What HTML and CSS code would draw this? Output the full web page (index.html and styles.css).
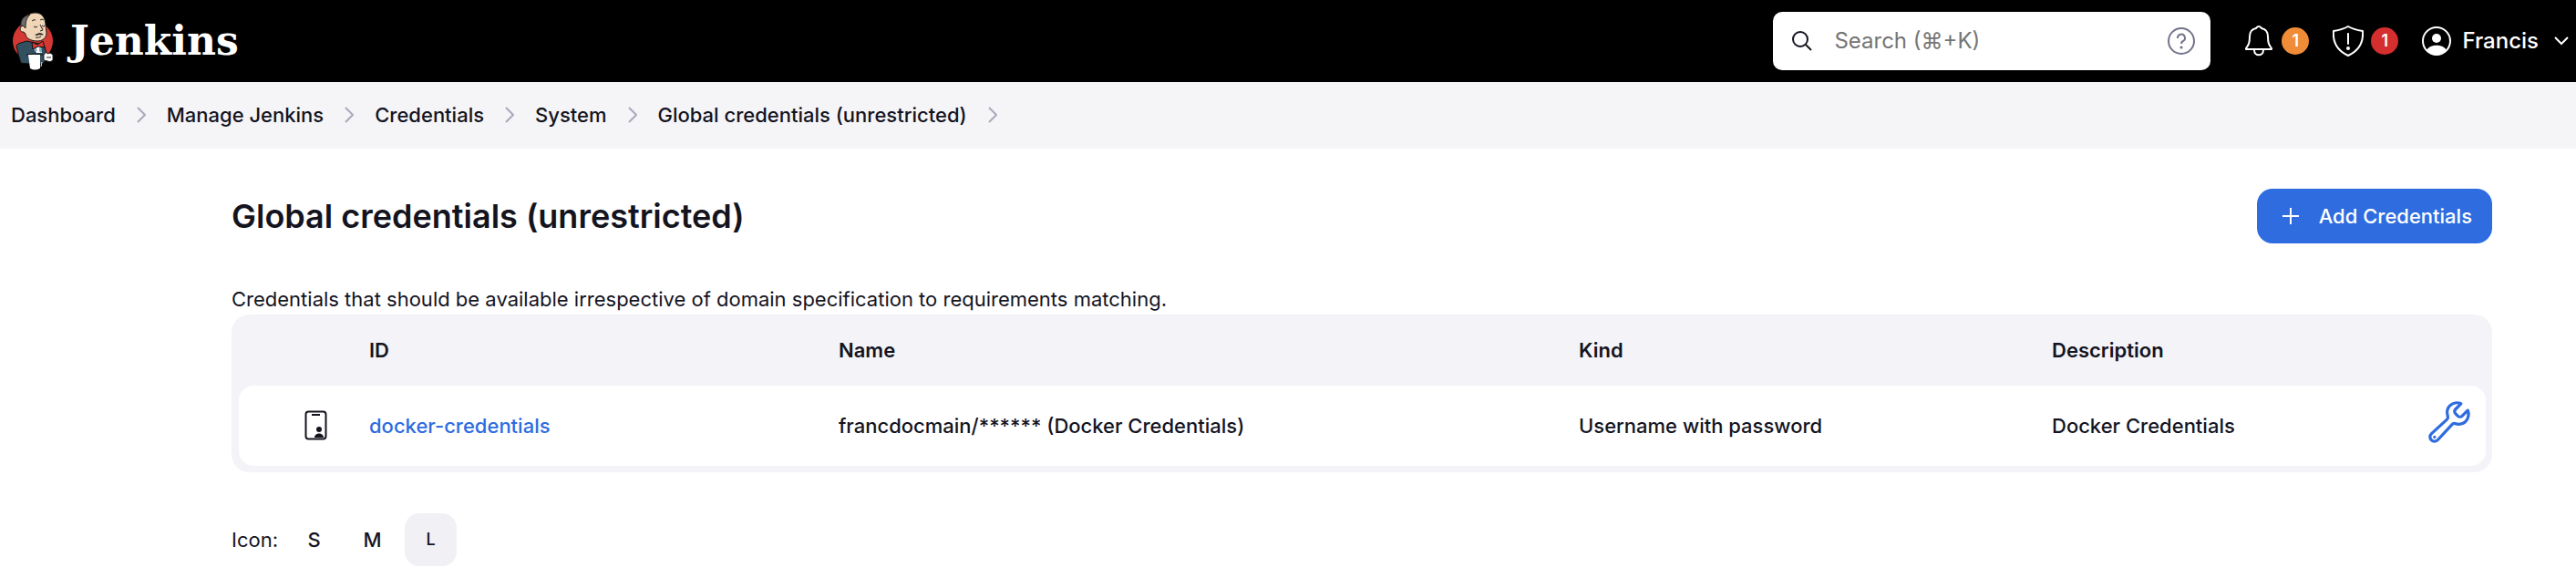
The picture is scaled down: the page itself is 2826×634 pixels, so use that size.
FILE: index.html
```html
<!DOCTYPE html>
<html lang="en">
<head>
<meta charset="utf-8">
<title>Global credentials (unrestricted) - Jenkins</title>
<link rel="stylesheet" href="styles.css">
</head>
<body>
<header class="header">
  <a class="brand" href="#" aria-label="Jenkins">
    <svg class="brand-face" viewBox="0 0 46 64" aria-hidden="true">
      <ellipse cx="23" cy="32" rx="22" ry="22" fill="#d33833"/>
      <path d="M7 35L16 32L30 35L36 38L38 46L36 55L30 58L10 56L7 46L5 37Z" fill="#335061" stroke="#111" stroke-width="1"/>
      <path d="M22 36L31 38L33 45L27 45Z" fill="#fff"/>
      <path d="M23 39L26 38L28 43L25 43ZM30 39L33 40L32 45L30 43Z" fill="#81b0c4"/>
      <path d="M13 15C13 6 18 1 26 1C34 1 37 8 37 15L38 23C38 29 33 32 28 32C21 32 15 29 15 24L13 22C8 23 8 15 13 15Z" fill="#f0d6b7" stroke="#222" stroke-width="1"/>
      <path d="M10 16C9 9 13 4 20 3C16 7 15 10 15 18L12 15Z" fill="#6d6b6d" stroke="#222" stroke-width="1"/>
      <path d="M24 16q2 2 4 0M33 15q2 2 3 0M31 14l3 6-3 1M22 10q2-2 4-1M31 9q2-2 4 0M26 28q4 1 6-1" fill="none" stroke="#222" stroke-width="1"/>
      <path d="M25 25q3-1 5-2q3 0 5 2q-3 1-5 0q-2 2-5 0z" fill="#333"/>
      <path d="M22 33L28 36L34 32L36 39L29 38L23 41Z" fill="#d33833" stroke="#111" stroke-width="1"/>
      <path d="M16 47Q24 45 34 47" fill="none" stroke="#111" stroke-width="1"/>
      <path d="M18 47L31 47L31 62Q25 65 20 62Z" fill="#fff"/>
      <path d="M33 55L32 60" stroke="#ddd" stroke-width="1"/>
      <path d="M35 47l3-3 1 2 3-1 3 2v6q-3 3-6 1l-4-1z" fill="#fff" stroke="#222" stroke-width="1"/>
      <path d="M38 50h5" stroke="#222" stroke-width="1"/>
    </svg>
    <span class="brand-name">Jenkins</span>
  </a>
  <div class="header-tools">
    <div class="search">
      <svg class="search-icon" viewBox="0 0 22 22" aria-hidden="true"><circle cx="9" cy="9" r="8"/><path d="M15 15l6 6"/></svg>
      <input class="search-input" type="text" placeholder="Search (⌘+K)" aria-label="Search">
      <a class="search-help" href="#" aria-label="Search help"><svg viewBox="0 0 30 30"><circle cx="15" cy="15" r="14"/><path d="M11 12a4 4 0 1 1 6 3c-2 1-2 2-2 3"/><circle class="dot" cx="15" cy="22" r="1.6"/></svg></a>
    </div>
    <button class="tool" type="button" aria-label="Notifications">
      <svg class="tool-icon" viewBox="0 0 34 34"><path d="M17 1c-2 0-2 1-3 2-5 1-7 5-7 9 0 7-1 9-4 13v1h28v-1c-3-4-4-6-4-13 0-4-2-8-7-9-1-1-1-2-3-2zM12 27c0 7 10 7 10 0"/></svg>
      <span class="badge badge-orange">1</span>
    </button>
    <button class="tool" type="button" aria-label="Security warnings">
      <svg class="tool-icon" viewBox="0 0 34 34"><path d="M17 1c5 3 10 4 16 5 1 12-3 21-16 27C4 27 0 18 1 6c6-1 11-2 16-5zM17 9v11"/><circle class="dot" cx="17" cy="25" r="2"/></svg>
      <span class="badge badge-red">1</span>
    </button>
    <button class="user" type="button">
      <svg class="user-icon" viewBox="0 0 32 32" aria-hidden="true"><circle cx="16" cy="16" r="15" fill="none" stroke="#fff" stroke-width="2"/><circle cx="16" cy="13" r="5" fill="#fff"/><path d="M5 26c4-7 18-7 22 0-6 7-16 7-22 0z" fill="#fff"/></svg>
      <span>Francis</span>
      <svg class="user-chevron" viewBox="0 0 16 10" aria-hidden="true"><path d="M1 1l7 7 7-7"/></svg>
    </button>
  </div>
</header>
<nav class="crumbs" aria-label="Breadcrumbs">
  <a href="#">Dashboard</a><svg viewBox="0 0 10 18"><path d="M1 1l8 8-8 8"/></svg>
  <a href="#">Manage Jenkins</a><svg viewBox="0 0 10 18"><path d="M1 1l8 8-8 8"/></svg>
  <a href="#">Credentials</a><svg viewBox="0 0 10 18"><path d="M1 1l8 8-8 8"/></svg>
  <a href="#">System</a><svg viewBox="0 0 10 18"><path d="M1 1l8 8-8 8"/></svg>
  <a href="#">Global credentials (unrestricted)</a><svg viewBox="0 0 10 18"><path d="M1 1l8 8-8 8"/></svg>
</nav>
<main class="main">
  <div class="title-bar">
    <h1>Global credentials (unrestricted)</h1>
    <button class="add" type="button"><svg viewBox="0 0 18 18" aria-hidden="true"><path d="M9 0v18M0 9h18"/></svg>Add Credentials</button>
  </div>
  <p class="intro">Credentials that should be available irrespective of domain specification to requirements matching.</p>
  <div class="table-box">
    <table class="table">
      <colgroup><col class="c-icon"><col class="c-id"><col class="c-name"><col class="c-kind"><col class="c-desc"><col class="c-tool"></colgroup>
      <thead><tr><th></th><th>ID</th><th>Name</th><th>Kind</th><th>Description</th><th></th></tr></thead>
      <tbody><tr>
        <td class="cell-icon"><svg class="cred-icon" viewBox="0 0 26 34" aria-hidden="true"><rect x="1.5" y="1.5" width="22" height="30" rx="3" fill="none" stroke="#14141f" stroke-width="2"/><path d="M8 5h9" stroke="#14141f" stroke-width="2"/><circle cx="16" cy="21" r="3" fill="#14141f"/><path d="M11 30c0-6 10-6 10 0z" fill="#14141f"/></svg></td>
        <td><a class="cred-link" href="#">docker-credentials</a></td>
        <td>francdocmain/****** (Docker Credentials)</td>
        <td>Username with password</td>
        <td>Docker Credentials</td>
        <td class="cell-tool"><a href="#" aria-label="Update"><svg class="wrench" viewBox="0 0 512 512"><path d="M393.87 190a32.1 32.1 0 01-45.25 0l-26.57-26.57a32.09 32.09 0 010-45.26L382.19 58a1 1 0 00-.3-1.64c-38.82-16.64-89.15-8.16-121.11 23.57-30.58 30.35-32.32 76-21.12 115.84a31.93 31.93 0 01-9.06 32.08L64 380a48.17 48.17 0 1068 68l153.86-167a31.93 31.93 0 0131.6-9.13c39.54 10.59 84.54 8.6 114.72-21.19 32.49-32 39.5-88.56 23.75-120.93a1 1 0 00-1.6-.26z"/><circle class="dot" cx="96" cy="416" r="16"/></svg></a></td>
      </tr></tbody>
    </table>
  </div>
  <div class="sizes">
    <span>Icon:</span>
    <button type="button">S</button>
    <button type="button">M</button>
    <button class="active" type="button">L</button>
  </div>
</main>
</body>
</html>
```

FILE: styles.css
```css
* { box-sizing: border-box; }
body {
  margin: 0;
  background: #fff;
  color: #14141f;
  font: 400 22px/32px Inter, "Liberation Sans", sans-serif;
}
a { color: inherit; text-decoration: none; }
button { border: 0; background: none; padding: 0; color: inherit; font: inherit; cursor: pointer; }
svg { display: block; flex: none; }

.header {
  display: flex;
  align-items: center;
  justify-content: space-between;
  padding: 13px 8px 13px 13px;
  background: #000;
  color: #fff;
}
.brand { display: flex; align-items: center; gap: 18px; }
.brand-face { width: 46px; height: 64px; }
.brand-name { font: 700 44px/56px "DejaVu Serif", serif; }
.header-tools { display: flex; align-items: center; }
.search {
  display: flex;
  align-items: center;
  width: 480px;
  height: 64px;
  margin-right: 36px;
  padding: 0 17px 0 21px;
  border-radius: 10px;
  background: #fff;
}
.search-icon { width: 22px; height: 22px; fill: none; stroke: #14141f; stroke-width: 2; }
.search-input {
  flex: 1;
  min-width: 0;
  margin-left: 24px;
  padding: 0;
  border: 0;
  outline: 0;
  background: none;
  font: 400 24px/32px Inter, "DejaVu Sans", sans-serif;
}
.search-input::placeholder { color: #757575; opacity: 1; }
.search-help svg { width: 30px; height: 30px; fill: none; stroke: #73738c; stroke-width: 2; }
.search-help .dot { fill: #73738c; stroke: none; }
.tool { display: flex; align-items: center; gap: 8px; margin-right: 26px; }
.tool-icon { width: 34px; height: 34px; fill: none; stroke: #fff; stroke-width: 2; stroke-linejoin: round; stroke-linecap: round; }
.tool-icon .dot { fill: #fff; stroke: none; }
.badge { width: 30px; height: 30px; border-radius: 50%; font-size: 18px; line-height: 30px; font-weight: 600; text-align: center; }
.badge-orange { background: #f08c38; }
.badge-red { background: #d42e2e; }
.user { display: flex; align-items: center; gap: 12px; font-size: 24px; font-weight: 500; }
.user-icon { width: 32px; height: 32px; }
.user-chevron { width: 16px; height: 10px; margin-left: 5px; fill: none; stroke: #fff; stroke-width: 2; }

.crumbs {
  display: flex;
  align-items: center;
  gap: 23px;
  padding: 20px 12px 21px;
  background: #f5f5f8;
  font-weight: 500;
}
.crumbs svg { width: 10px; height: 18px; fill: none; stroke: #a9a9bb; stroke-width: 2; }

.main { padding: 44px 92px 12px 254px; }
.title-bar { display: flex; align-items: center; justify-content: space-between; }
h1 { margin: 0; font-size: 36px; line-height: 48px; font-weight: 600; }
.add {
  display: flex;
  align-items: center;
  gap: 22px;
  padding: 14px 22px 14px 28px;
  border-radius: 17px;
  background: #2e6cdf;
  color: #fff;
  font-weight: 500;
}
.add svg { width: 18px; height: 18px; stroke: #fff; stroke-width: 2; }
.intro { margin: 45px 0 1px; }
.table-box { padding: 0 7px 7px 8px; border-radius: 20px; background: #f3f3f8; }
.table { width: 100%; border-collapse: separate; border-spacing: 0; table-layout: fixed; }
.table th { height: 78px; padding: 0; text-align: left; font-weight: 600; }
.table td { height: 88px; padding: 0; background: #fff; font-weight: 500; }
.table td:first-child { border-radius: 16px 0 0 16px; }
.table td:last-child { border-radius: 0 16px 16px 0; }
.c-icon { width: 143px; }
.c-id { width: 515px; }
.c-name { width: 812px; }
.c-kind { width: 519px; }
.c-tool { width: 66px; }
.cell-icon svg { width: 26px; height: 34px; margin-left: 72px; }
.cred-link { color: #2e6cdf; }
.table .cell-tool { padding-bottom: 8px; }
.wrench { width: 52px; height: 52px; fill: none; stroke: #2e6cdf; stroke-width: 32; stroke-linecap: round; stroke-linejoin: round; }
.wrench .dot { fill: #2e6cdf; stroke: none; }
.sizes { display: flex; align-items: center; gap: 7px; margin-top: 45px; }
.sizes span { margin-right: 4px; }
.sizes button { width: 57px; height: 58px; border-radius: 16px; font-weight: 500; }
.sizes .active { background: #f1f0f5; font-size: 18px; }
```
